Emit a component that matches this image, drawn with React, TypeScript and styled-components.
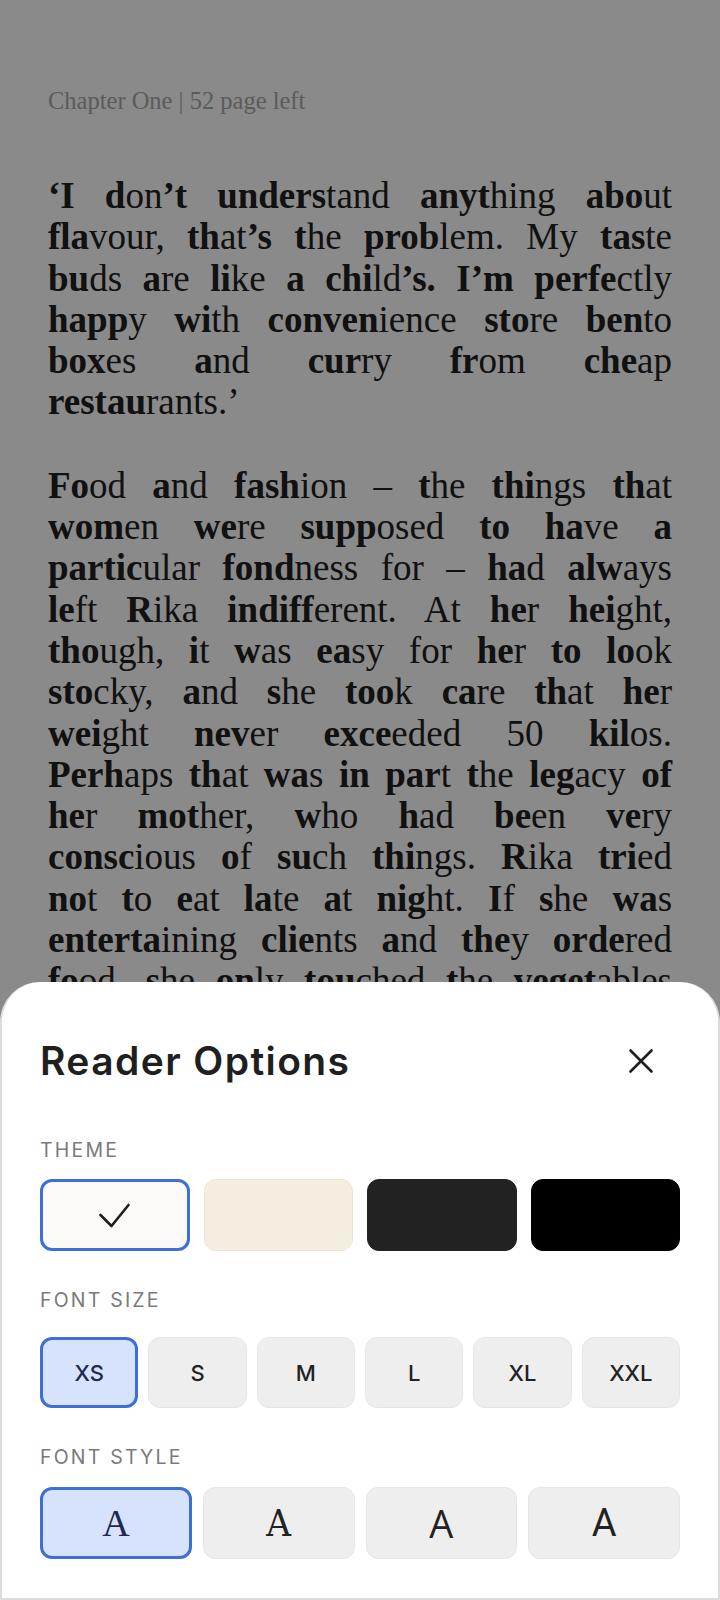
import React from 'react'
import styled, { createGlobalStyle } from 'styled-components'

const GlobalStyle = createGlobalStyle`
  * { box-sizing: border-box; }
  body {
    margin: 0;
    font-family: Inter, 'Noto Sans', sans-serif;
    background: #fff;
  }
  button { font-family: inherit; cursor: pointer; }
`

const BLUE = '#3d6fd6'

// words marked *like this* are the bold fixation part
const paragraphs: string[][] = [
  [
    '*‘I* *d*on*’t* *unders*tand *anyt*hing *abo*ut',
    '*fla*vour, *th*at*’s* *t*he *prob*lem. My *tas*te',
    '*bu*ds *a*re *li*ke *a* *chi*ld*’s.* *I’m* *perfe*ctly',
    '*happ*y *wi*th *conven*ience *sto*re *ben*to',
    '*box*es *a*nd *cur*ry *fr*om *che*ap',
    '*restau*rants.’',
  ],
  [
    '*Fo*od *a*nd *fash*ion – *t*he *thi*ngs *th*at',
    '*wom*en *we*re *supp*osed *to* *ha*ve *a*',
    '*partic*ular *fond*ness for – *ha*d *alw*ays',
    '*le*ft *R*ika *indiff*erent. At *he*r *hei*ght,',
    '*tho*ugh, *i*t *w*as *ea*sy for *he*r *to* *lo*ok',
    '*sto*cky, *a*nd *s*he *too*k *ca*re *th*at *he*r',
    '*wei*ght *nev*er *exce*eded 50 *kil*os.',
    '*Perh*aps *th*at *wa*s *in* *par*t *t*he *leg*acy *of*',
    '*he*r *mot*her, *w*ho *h*ad *be*en *ve*ry',
    '*consc*ious *o*f *su*ch *thi*ngs. *R*ika *tri*ed',
    '*no*t *t*o *e*at *la*te *a*t *nig*ht. *I*f *s*he *wa*s',
    '*enterta*ining *clie*nts *a*nd *the*y *orde*red',
    '*fo*od, *s*he *on*ly *tou*ched *t*he *veget*ables',
  ],
]

const themes = [
  { bg: '#fbfaf8', edge: '#e6e3dc' },
  { bg: '#f3eee0', edge: '#ebe5d6' },
  { bg: '#222222', edge: '#222222' },
  { bg: '#000000', edge: '#000000' },
]

const sizes = ['XS', 'S', 'M', 'L', 'XL', 'XXL']

const fontStyles = [
  { family: "'Liberation Serif', serif", stretch: 'normal' },
  { family: "'DejaVu Serif', serif", stretch: 'condensed' },
  { family: "'Open Sans', sans-serif", stretch: 'normal' },
  { family: 'Roboto, sans-serif', stretch: 'normal' },
]

const renderLine = (line: string) =>
  line.split('*').map((part, i) => (i % 2 === 1 ? <Strong key={i}>{part}</Strong> : part))

const CheckIcon = () => (
  <svg width="31" height="25" viewBox="0 0 31 25" fill="none">
    <path d="M1.5 12 L12.5 23 L29.5 2" stroke="#1d1d1d" strokeWidth="2.6" strokeLinecap="round" strokeLinejoin="round" />
  </svg>
)

const CloseIcon = () => (
  <svg width="24" height="24" viewBox="0 0 24 24" fill="none">
    <path d="M1.5 1.5 L22.5 22.5 M22.5 1.5 L1.5 22.5" stroke="#1f1f1f" strokeWidth="2.6" strokeLinecap="round" />
  </svg>
)

const App = () => {
  return (
    <Page>
      <GlobalStyle />
      <Reader>
        <Chapter>Chapter One | 52 page left</Chapter>
        {paragraphs.map((lines, p) => (
          <Paragraph key={p}>
            {lines.map((line, i) => (
              <Line key={i} $last={p === 0 && i === lines.length - 1}>
                {renderLine(line)}
              </Line>
            ))}
          </Paragraph>
        ))}
      </Reader>
      <Backdrop />
      <Sheet>
        <Header>
          <Title>Reader Options</Title>
          <CloseButton aria-label="Close">
            <CloseIcon />
          </CloseButton>
        </Header>

        <Section>
          <Label $space={19}>Theme</Label>
          <Row $cols={4} $gap={14}>
            {themes.map((t, i) => (
              <Swatch key={i} $bg={t.bg} $edge={t.edge} $selected={i === 0}>
                {i === 0 && <CheckIcon />}
              </Swatch>
            ))}
          </Row>
        </Section>

        <Section>
          <Label $space={27}>Font Size</Label>
          <Row $cols={6} $gap={10}>
            {sizes.map((s, i) => (
              <Choice key={s} $selected={i === 0}>
                {s}
              </Choice>
            ))}
          </Row>
        </Section>

        <Section>
          <Label $space={20}>Font Style</Label>
          <Row $cols={4} $gap={11}>
            {fontStyles.map((f, i) => (
              <StyleChoice key={i} $font={f.family} $stretch={f.stretch} $selected={i === 0}>
                A
              </StyleChoice>
            ))}
          </Row>
        </Section>
      </Sheet>
    </Page>
  )
}

export default App

const Page = styled.div`
  position: relative;
  height: 100vh;
  overflow: hidden;
  background: #ffffff;
`

const Reader = styled.div`
  padding: 86px 48px 0;
  color: #202020;
`

const Chapter = styled.div`
  font-family: 'Liberation Serif', serif;
  font-size: 24.5px;
  line-height: 29px;
  color: #a9a9a9;
  margin-bottom: 60px;
`

const Paragraph = styled.p`
  margin: 0 0 42px;
  font-family: 'Liberation Serif', serif;
  font-size: 37px;
  line-height: 41.3px;
`

const Line = styled.span<{ $last?: boolean }>`
  display: block;
  text-align: justify;
  text-align-last: ${({ $last }) => ($last ? 'left' : 'justify')};
`

const Strong = styled.b`
  font-weight: 700;
`

const Backdrop = styled.div`
  position: absolute;
  inset: 0;
  background: rgba(0, 0, 0, 0.46);
`

const Sheet = styled.div`
  position: absolute;
  left: 0;
  right: 0;
  bottom: 0;
  background: #ffffff;
  border: 2px solid #dcdcdc;
  border-top: none;
  border-radius: 40px 40px 0 0;
  padding: 56px 38px 39px;
`

const Header = styled.div`
  display: flex;
  align-items: center;
  justify-content: space-between;
  margin-bottom: 56px;
`

const Title = styled.h2`
  margin: 0;
  font-size: 39px;
  line-height: 46px;
  font-weight: 600;
  color: #1f1f1f;
  letter-spacing: 1.4px;
`

const CloseButton = styled.button`
  width: 44px;
  height: 44px;
  margin-right: 17px;
  padding: 0;
  border: none;
  background: transparent;
  display: grid;
  place-items: center;
`

const Section = styled.section`
  & + & {
    margin-top: 39px;
  }
`

const Label = styled.div<{ $space: number }>`
  font-size: 19.5px;
  line-height: 20px;
  font-weight: 400;
  letter-spacing: 2.2px;
  text-transform: uppercase;
  color: #7a7a7a;
  margin-bottom: ${({ $space }) => $space}px;
`

const Row = styled.div<{ $cols: number; $gap: number }>`
  display: grid;
  grid-template-columns: repeat(${({ $cols }) => $cols}, 1fr);
  gap: ${({ $gap }) => $gap}px;
`

const Swatch = styled.button<{ $bg: string; $edge: string; $selected?: boolean }>`
  height: 72px;
  border-radius: 12px;
  background: ${({ $bg }) => $bg};
  border: ${({ $selected, $edge }) => ($selected ? `3px solid ${BLUE}` : `1px solid ${$edge}`)};
  display: grid;
  place-items: center;
  padding: 0;
`

const Choice = styled.button<{ $selected?: boolean }>`
  height: 71px;
  border-radius: 12px;
  background: ${({ $selected }) => ($selected ? '#d7e3fd' : '#eeeeee')};
  border: ${({ $selected }) => ($selected ? `3px solid ${BLUE}` : '1px solid #e6e6e6')};
  color: ${({ $selected }) => ($selected ? '#1d2a4e' : '#222222')};
  font-size: 22px;
  font-weight: 500;
  padding: 0;
`

const StyleChoice = styled(Choice)<{ $font: string; $stretch: string }>`
  height: 72px;
  font-family: ${({ $font }) => $font};
  font-stretch: ${({ $stretch }) => $stretch};
  font-size: 38px;
  font-weight: 400;
`
